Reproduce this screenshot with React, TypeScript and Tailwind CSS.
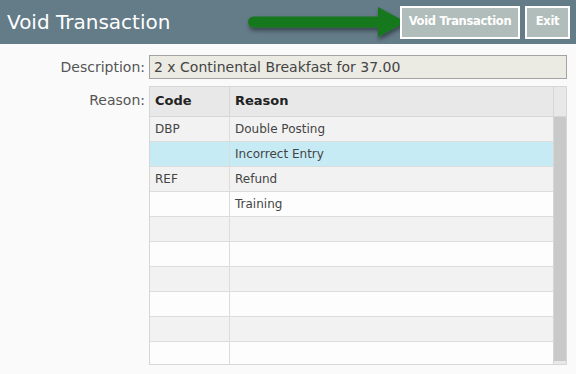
import React from "react";

const rows: { code: string; reason: string }[] = [
  { code: "DBP", reason: "Double Posting" },
  { code: "", reason: "Incorrect Entry" },
  { code: "REF", reason: "Refund" },
  { code: "", reason: "Training" },
  { code: "", reason: "" },
  { code: "", reason: "" },
  { code: "", reason: "" },
  { code: "", reason: "" },
  { code: "", reason: "" },
  { code: "", reason: "" },
];

function Arrow() {
  return (
    <svg width="170" height="40" viewBox="0 0 170 40" className="absolute left-[244px] top-[2px]">
      <defs>
        <filter id="sh" x="-10%" y="-30%" width="120%" height="160%">
          <feDropShadow dx="1" dy="3" stdDeviation="2" floodColor="#000" floodOpacity="0.45" />
        </filter>
      </defs>
      <g filter="url(#sh)">
        <path d="M9.5 14.5 H134 V5 L162 20 L134 35 V25.5 H9.5 A5.5 5.5 0 0 1 9.5 14.5 Z" fill="#15781f" />
      </g>
    </svg>
  );
}

export default function App() {
  return (
    <div className="w-[576px] h-[374px] bg-[#fafafa] overflow-hidden" style={{ fontFamily: '"DejaVu Sans", Verdana, sans-serif' }}>
      <div className="relative h-[44px] bg-[#647b88] flex items-center justify-between pl-[7px] pr-[6px]">
        <div className="text-white text-[20px] leading-none">Void Transaction</div>
        <Arrow />
        <div className="flex gap-[5px] relative">
          <button className="h-[33px] w-[120px] border-2 border-white bg-[#b1bdba] text-white text-[11.5px] font-bold tracking-[-0.3px]">Void Transaction</button>
          <button className="h-[33px] w-[45px] border-2 border-white bg-[#b1bdba] text-white text-[11.5px] font-bold tracking-[-0.3px]">Exit</button>
        </div>
      </div>
      <div className="pt-[11px] pl-[4px] grid grid-cols-[141px_418px] gap-x-[4px] gap-y-[7px] text-[#555]">
        <div className="text-right text-[14px] leading-[24px]">Description:</div>
        <div className="h-[24px] border border-[#a3a3a3] bg-[#ebeae3] text-[14px] leading-[22px] pl-[4px] text-[#444]">2 x Continental Breakfast for 37.00</div>
        <div className="text-right text-[14px] leading-[28px]">Reason:</div>
        <div className="border border-[#d6d6d6] flex h-[279px] overflow-hidden">
          <div className="flex-1 flex flex-col">
            <div className="h-[30px] shrink-0 bg-[#e8e8e8] flex border-b border-[#d6d6d6] text-[13px] font-bold text-[#222]">
              <div className="w-[80px] border-r border-[#d6d6d6] pl-[5px] leading-[28px]">Code</div>
              <div className="flex-1 pl-[5px] leading-[28px]">Reason</div>
            </div>
            {rows.map((r, i) => (
              <div
                key={i}
                className={`h-[25px] shrink-0 flex border-b border-[#dcdcdc] text-[12px] text-[#444] ${i === 1 ? "bg-[#c6ebf4]" : i % 2 === 0 ? "bg-[#f2f2f2]" : "bg-[#fdfdfd]"}`}
              >
                <div className="w-[80px] border-r border-[#dcdcdc] pl-[5px] leading-[25px]">{r.code}</div>
                <div className="flex-1 pl-[5px] leading-[25px]">{r.reason}</div>
              </div>
            ))}
          </div>
          <div className="w-[13px] shrink-0 border-l border-[#d6d6d6] flex flex-col bg-[#e8e8e8]">
            <div className="h-[30px] shrink-0 border-b border-[#d6d6d6]" />
            <div className="flex-1 bg-[#c9c9c9] mb-[3px]" />
          </div>
        </div>
      </div>
    </div>
  );
}
